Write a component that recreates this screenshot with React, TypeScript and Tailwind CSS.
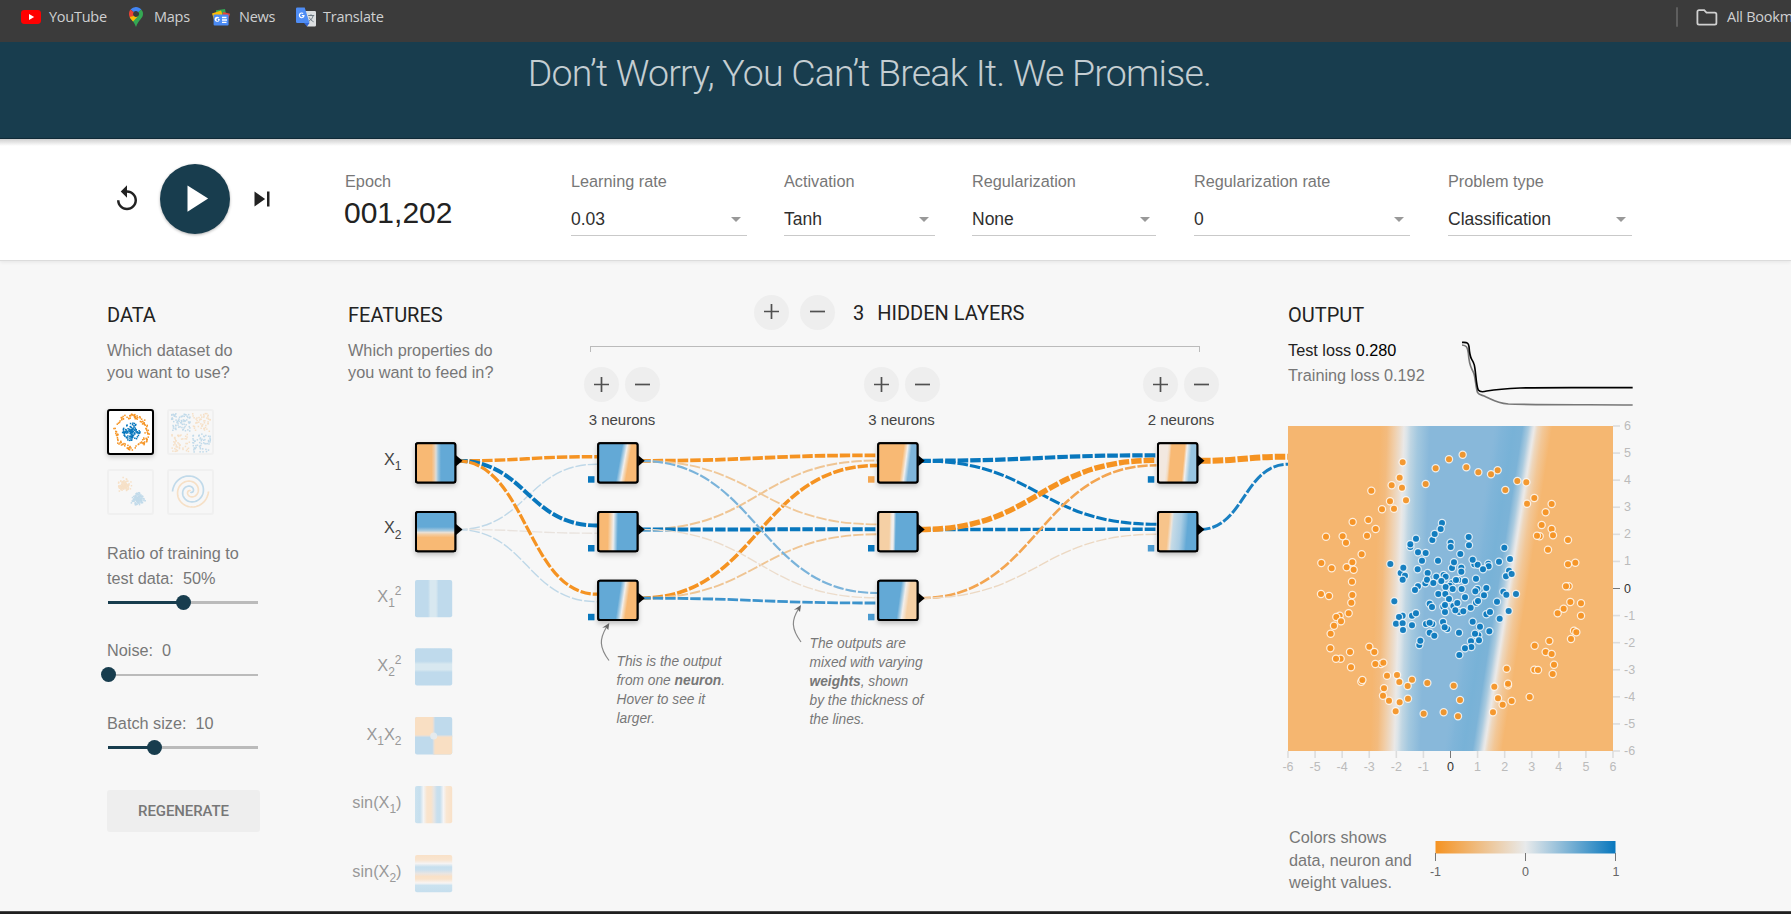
import React from "react";

const ARIAL = "font-['Liberation_Sans',Arial,sans-serif]";
const ORANGE = "#f59322";
const BLUE = "#0877bd";

type Stop = [number, string];

/* ---------- Browser bookmarks bar ---------- */

function YouTubeIcon() {
  return (
    <svg width="20" height="14" viewBox="0 0 20 14">
      <rect width="20" height="14" rx="3.4" fill="#f00" />
      <path d="M8 4v6l5.2-3z" fill="#fff" />
    </svg>
  );
}

function MapsIcon() {
  return (
    <svg width="14" height="20" viewBox="0 0 14 20">
      <path d="M7 0C9.1 0 11 .9 12.3 2.4L9.2 5.200A2.900 2.900 0 0 0 4.700 5.100L1.500 2.600A7 7 0 0 1 7 0z" fill="#4285f4" />
      <path d="M1.500 2.600L4.700 5.300A2.900 2.900 0 0 0 4.800 9L1.700 11.700C.600 10.200 0 8.600 0 7c0-1.700.500-3.200 1.500-4.400z" fill="#ea4335" />
      <path d="M9.300 5.100L12.300 2.400A7 7 0 0 1 14 7c0 4.500-4.500 5.500-7 13C5.500 15.700 3.500 13.700 1.700 11.700L4.800 9a2.900 2.900 0 0 0 4.400 0 2.900 2.900 0 0 0 .1-3.900z" fill="#34a853" />
      <path d="M1.700 11.700L9.200 9a2.900 2.900 0 0 1-4.400 0L.700 10c.300.600.600 1.200 1 1.700l2.300 2.700L9.200 9z" fill="#fbbc04" />
    </svg>
  );
}

function NewsIcon() {
  return (
    <svg width="18" height="17" viewBox="0 0 18 17">
      <path d="M4 1.200L13 0l1 5H4z" fill="#34a853" />
      <path d="M0 4.500l9-3 3 8-9 4z" fill="#fbbc04" />
      <path d="M11 3l7 1.800-2.500 8L10 10z" fill="#ea4335" />
      <rect x="1.600" y="5.500" width="15" height="11" rx="1" fill="#4a8bf5" />
      <path d="M7.700 10H5.900v1.400h.8a1.300 1.300 0 1 1-.3-1.800l.9-.9a2.600 2.600 0 1 0 .5 1.300z" fill="#fff" />
      <path d="M10 8.500h4.500M10 11h5M10 13.400h4.500" stroke="#fff" strokeWidth="1.300" />
    </svg>
  );
}

function TranslateIcon() {
  return (
    <svg width="20" height="20" viewBox="0 0 20 20">
      <path d="M9 4h9.500A1.300 1.300 0 0 1 20 5.300v12.900A1.300 1.300 0 0 1 18.700 19.500H11z" fill="#dcdfe1" />
      <path d="M8 16h5.500L11 19.500z" fill="#3367d6" />
      <path d="M1.200.500h7.500L13.500 16H1.200A1.200 1.200 0 0 1 0 14.800V1.700A1.200 1.200 0 0 1 1.200.500z" fill="#4f8df5" />
      <path d="M12.200 8.500h6M15 7.300v1.200M17.200 8.500c-.6 2.600-2.200 4.400-4.200 5.600M13.300 10.500c.8 1.800 2.400 3.300 4.300 4.300" stroke="#6d7a83" strokeWidth="1" fill="none" />
      <path d="M8.600 8H5.800v1.200h1.400a1.700 1.700 0 1 1-.5-2.200l.9-.9a2.900 2.900 0 1 0 1 1.900z" fill="#fff" />
    </svg>
  );
}

function BookmarksBar() {
  return (
    <div className="flex h-[42px] items-start overflow-hidden bg-[#3b3b3b] font-['Open_Sans','Noto_Sans',sans-serif] text-[14.5px] tracking-[-0.25px] text-[#cfd0d1]">
      <div className="flex h-[34px] w-full items-center pl-[21px]">
        <div className="flex w-[108px] items-center gap-[8px]"><YouTubeIcon /><span>YouTube</span></div>
        <div className="flex w-[83px] items-center gap-[11px]"><MapsIcon /><span>Maps</span></div>
        <div className="flex w-[84px] items-center gap-[9px]"><NewsIcon /><span>News</span></div>
        <div className="flex items-center gap-[7px]"><TranslateIcon /><span>Translate</span></div>
        <div className="ml-auto flex w-[115px] items-center whitespace-nowrap">
          <div className="h-[20px] w-[2px] shrink-0 rounded bg-[#5e5e5e]" />
          <svg className="ml-[18px] shrink-0" width="22" height="17" viewBox="0 0 22 17">
            <path d="M3 1.200h5.200l2.300 2.500h8.300a1.600 1.600 0 0 1 1.600 1.600v8.800a1.600 1.600 0 0 1-1.600 1.600H3a1.600 1.600 0 0 1-1.600-1.600V2.800A1.600 1.600 0 0 1 3 1.200z" fill="none" stroke="#d0d0d0" strokeWidth="1.800" />
          </svg>
          <span className="ml-[9px]">All Bookmarks</span>
        </div>
      </div>
    </div>
  );
}

/* ---------- Top controls ---------- */

interface SelectProps {
  label: string;
  value: string;
  className: string;
}

function Select({ label, value, className }: SelectProps) {
  return (
    <div className={"shrink-0 " + className}>
      <div className="mt-[31px] h-[22px] text-[16.250px] leading-[22px] text-[#777]">{label}</div>
      <div className="mt-[11px] flex h-[33px] items-center justify-between border-b border-[#c9c9c9] pr-[6px]">
        <span className="text-[17.500px] leading-[28px] text-[#2f2f2f]">{value}</span>
        <svg width="10" height="5" viewBox="0 0 10 5"><path d="M0 0h10L5 5z" fill="#999" /></svg>
      </div>
    </div>
  );
}

function TopControls() {
  return (
    <div className={"relative flex h-[122px] border-b border-[#dcdcdc] bg-white shadow-[0_1px_4px_rgba(0,0,0,0.08)] " + ARIAL}>
      <div className="absolute inset-x-0 top-0 h-[7px] bg-gradient-to-b from-[#cfcfcf] to-white" />
      <div className="flex w-[345px] items-center pb-[2px] pl-[112px]">
        <svg width="30" height="30" viewBox="0 0 24 24" fill="#222">
          <path d="M12 5V1L7 6l5 5V7c3.310 0 6 2.690 6 6s-2.690 6-6 6-6-2.690-6-6H4c0 4.420 3.580 8 8 8s8-3.580 8-8-3.580-8-8-8z" />
        </svg>
        <div className="ml-[18px] flex size-[70px] items-center justify-center rounded-full bg-[#183d4e] shadow-[0_1px_3px_rgba(0,0,0,0.3)]">
          <svg width="46" height="45" viewBox="0 0 24 24" fill="#fff"><path d="M8 5v14l11-7z" /></svg>
        </div>
        <svg className="ml-[17px]" width="30" height="30" viewBox="0 0 24 24" fill="#222">
          <path d="M6 18l8.500-6L6 6v12zM16 6v12h2V6h-2z" />
        </svg>
      </div>
      <div className="w-[226px]">
        <div className="mt-[31px] h-[22px] text-[16.250px] leading-[22px] text-[#777]">Epoch</div>
        <div className="-ml-px mt-[3px] text-[30px] leading-[36px] text-[#222]">001,202</div>
      </div>
      <Select label="Learning rate" value="0.03" className="w-[176px]" />
      <Select label="Activation" value="Tanh" className="ml-[37px] w-[151px]" />
      <Select label="Regularization" value="None" className="ml-[37px] w-[184px]" />
      <Select label="Regularization rate" value="0" className="ml-[38px] w-[216px]" />
      <Select label="Problem type" value="Classification" className="ml-[38px] w-[184px]" />
    </div>
  );
}

/* ---------- Data column ---------- */

function seeded(seed: number) {
  let s = seed;
  return () => {
    s = (s * 16807) % 2147483647;
    return s / 2147483647;
  };
}

type Dot = [number, number, string];

function circleDots(): Dot[] {
  const r = seeded(11);
  const out: Dot[] = [];
  for (let i = 0; i < 110; i++) {
    const d = 9 * Math.pow(r(), 0.9), a = r() * Math.PI * 2;
    out.push([24.5 + d * Math.cos(a), 23 + d * Math.sin(a), BLUE]);
  }
  for (let i = 0; i < 115; i++) {
    const d = 13.5 + 4.5 * r(), a = r() * Math.PI * 2;
    out.push([24.5 + d * Math.cos(a), 23 + d * Math.sin(a), ORANGE]);
  }
  return out;
}

function xorDots(): Dot[] {
  const r = seeded(42);
  const out: Dot[] = [];
  for (let i = 0; i < 230; i++) {
    const left = r() < 0.5, top = r() < 0.5;
    const x = left ? 4.5 + r() * 18.5 : 25.5 + r() * 18;
    const y = top ? 4.5 + r() * 18 : 25 + r() * 18;
    out.push([x, y, left === top ? BLUE : ORANGE]);
  }
  return out;
}

function gaussDots(): Dot[] {
  const r = seeded(7);
  const g = () => r() + r() + r() + r() - 2;
  const out: Dot[] = [];
  for (let i = 0; i < 110; i++) {
    out.push([17 + g() * 4.4, 16 + g() * 4.4, ORANGE]);
    out.push([31 + g() * 4.4, 30 + g() * 4.4, BLUE]);
  }
  return out;
}

function DotPlot({ dots }: { dots: Dot[] }) {
  return (
    <g>
      {dots.map(([x, y, c], i) => (
        <rect key={i} x={x - 0.7} y={y - 0.7} width="1.500" height="1.500" fill={c} />
      ))}
    </g>
  );
}

function spiralPath(delta: number) {
  const pts: string[] = [];
  for (let i = 2; i <= 100; i++) {
    const rad = (i / 100) * 18;
    const t = (i / 100) * 1.75 * 2 * Math.PI + delta;
    pts.push((23.5 + rad * Math.sin(t)).toFixed(2) + " " + (22.5 + rad * Math.cos(t)).toFixed(2));
  }
  return "M" + pts.join("L");
}

function Thumb({ active, children }: { active?: boolean; children: React.ReactNode }) {
  return (
    <div className={active ? "h-[46px] w-[47px] overflow-hidden rounded-[3px] border-2 border-black bg-white shadow-[0_2px_5px_rgba(0,0,0,0.2)]" : "h-[46px] w-[47px] overflow-hidden rounded-[3px] border-2 border-[#f0f0f0]"}>
      <svg className={active ? "-ml-[2px] -mt-[2px]" : "-ml-[2px] -mt-[2px] opacity-[0.22]"} width="47" height="46" viewBox="0 0 47 46">{children}</svg>
    </div>
  );
}

function Slider({ at, thin }: { at: number; thin?: boolean }) {
  return (
    <div className="relative ml-px flex h-[15px] w-[150px] items-center">
      <div className={thin ? "h-[2px] w-full bg-[#bbb]" : "h-[3px] w-full bg-[#bbb]"} />
      <div className="absolute left-0 h-[3px] bg-[#183d4e]" style={{ width: at }} />
      <div className="absolute size-[15px] rounded-full bg-[#183d4e]" style={{ left: at - 7.5 }} />
    </div>
  );
}

function DataColumn() {
  return (
    <div className={"w-[349px] shrink-0 pl-[107px] text-[16.250px] text-[#777] " + ARIAL}>
      <h2 className="mt-[42px] font-[Roboto,sans-serif] text-[20px] leading-[24px] text-[#222]">DATA</h2>
      <p className="mt-[12px] h-[44px] leading-[22px]">Which dataset do<br />you want to use?</p>
      <div className="mt-[26px] grid w-[107px] grid-cols-[47px_47px] gap-x-[13px] gap-y-[14px]">
        <Thumb active><DotPlot dots={circleDots()} /></Thumb>
        <Thumb><DotPlot dots={xorDots()} /></Thumb>
        <Thumb><DotPlot dots={gaussDots()} /></Thumb>
        <Thumb>
          <path d={spiralPath(0)} fill="none" stroke={BLUE} strokeWidth="1.700" />
          <path d={spiralPath(Math.PI)} fill="none" stroke={ORANGE} strokeWidth="1.700" />
        </Thumb>
      </div>
      <p className="mt-[26px] h-[50px] leading-[25px] whitespace-pre">{"Ratio of training to\ntest data:  50%"}</p>
      <div className="mt-[4px]"><Slider at={75.5} /></div>
      <p className="mt-[28px] h-[25px] leading-[25px] whitespace-pre">{"Noise:  0"}</p>
      <div className="mt-[4px]"><Slider at={0.5} thin /></div>
      <p className="mt-[29px] h-[25px] leading-[25px] whitespace-pre">{"Batch size:  10"}</p>
      <div className="mt-[4px]"><Slider at={46.5} /></div>
      <button className="mt-[35px] h-[42px] w-[153px] rounded-[3px] bg-[#eee] font-[Roboto,sans-serif] text-[15px] font-medium tracking-[-0.1px] text-[#777]">REGENERATE</button>
    </div>
  );
}

/* ---------- Network diagram ---------- */

interface HeatProps {
  id: string;
  x: number;
  y: number;
  size: number;
  stops: Stop[];
  tilt?: number;
  vertical?: boolean;
  r?: number;
}

function Heat({ id, x, y, size, stops, tilt = 0, vertical, r = 2 }: HeatProps) {
  const k = size / (1 + tilt * tilt);
  return (
    <g>
      <linearGradient
        id={id}
        gradientUnits="userSpaceOnUse"
        x1={x}
        y1={y}
        x2={vertical ? x : x + k}
        y2={vertical ? y + size : y + k * tilt}
      >
        {stops.map(([o, c], i) => (
          <stop key={i} offset={o / size} stopColor={c} />
        ))}
      </linearGradient>
      <rect x={x} y={y} width={size} height={size} rx={r} fill={"url(#" + id + ")"} />
    </g>
  );
}

const NO = "#f8b974";
const NB = "#63a9d6";
const W = "#f1eeec";

interface NodeSpec {
  x: number;
  y: number;
  stops: Stop[];
  tilt?: number;
  vertical?: boolean;
  bias?: string;
}

const nodes: NodeSpec[] = [
  { x: 415, y: 442.2, stops: [[15.5, NO], [18, "#f0c9a0"], [20, "#dcdcd8"], [22, "#9cc5de"], [25, NB]] },
  { x: 415, y: 511, vertical: true, stops: [[15, NB], [18.5, "#a7c9de"], [20.5, "#e8dfd4"], [22.5, "#f3cda2"], [25.5, NO]] },
  { x: 597.2, y: 442.2, tilt: 0.18, bias: BLUE, stops: [[24.5, NB], [27.5, "#b3d2e5"], [29.5, W], [31, "#f4dcc0"], [34, NO]] },
  { x: 597.2, y: 511, tilt: 0.02, bias: BLUE, stops: [[10, NO], [13, "#f4d6b4"], [15.5, W], [17, "#c0d9e8"], [20, NB]] },
  { x: 597.2, y: 579.8, tilt: 0.15, bias: BLUE, stops: [[23, NB], [26, "#b3d2e5"], [28, W], [29.500, "#f4dcc0"], [32.5, NO]] },
  { x: 877.2, y: 442.2, tilt: 0.13, bias: "#f4a650", stops: [[26, NO], [28.500, "#f5dabb"], [30, W], [31.5, "#c0d9e8"], [34, "#7fb5da"]] },
  { x: 877.2, y: 511, tilt: 0.02, bias: BLUE, stops: [[11.5, "#f5d0a5"], [14, W], [15.5, W], [18, NB]] },
  { x: 877.2, y: 579.8, tilt: 0.14, bias: "#4a9ad0", stops: [[23.500, NB], [26.500, "#b3d2e5"], [28.500, W], [31, "#f4dfc8"], [33, "#f5d0a5"]] },
  { x: 1157, y: 442.2, tilt: 0.09, bias: BLUE, stops: [[10, "#f2e8e0"], [12, "#f3dcc3"], [14, NO], [27, NO], [29.500, W], [31.5, "#c8dde9"], [34, "#98c5e1"]] },
  { x: 1157, y: 511, tilt: 0.09, bias: "#4a9ad0", stops: [[11.5, "#f7c48b"], [14.5, "#f0e4d8"], [16.5, "#c5dae6"], [24, "#aacde4"], [29, "#7bb5da"], [31, NB]] },
];

interface LinkSpec {
  from: [number, number];
  to: [number, number];
  w: number;
  c: string;
}

const S1 = 457, S2 = 640, S3 = 920, S4 = 1200;
const T1 = 597, T2 = 877, T3 = 1156.500, T4 = 1288;
const R1 = 460.800, R2 = 529.500, R3 = 598.200;

const links: LinkSpec[] = [
  { from: [S1, R1], to: [T1, 456.700], w: 3.4, c: ORANGE },
  { from: [S1, R2], to: [T1, 464.200], w: 1.4, c: "#bfd8e8" },
  { from: [S1, R1], to: [T1, 525.500], w: 4, c: BLUE },
  { from: [S1, R2], to: [T1, 533.200], w: 1.4, c: "#e9e3de" },
  { from: [S1, R1], to: [T1, 594.200], w: 3.2, c: ORANGE },
  { from: [S1, R2], to: [T1, 601.700], w: 1.4, c: "#bfd8e8" },
  { from: [S2, R1], to: [T2, 455.300], w: 3.8, c: ORANGE },
  { from: [S2, R2], to: [T2, 460.500], w: 2, c: "#efc594" },
  { from: [S2, R3], to: [T2, 465.500], w: 3.6, c: ORANGE },
  { from: [S2, R1], to: [T2, 524.300], w: 1.8, c: "#f0c899" },
  { from: [S2, R2], to: [T2, 529.300], w: 4, c: BLUE },
  { from: [S2, R3], to: [T2, 534.300], w: 1.9, c: "#efc594" },
  { from: [S2, R1], to: [T2, 593], w: 2.2, c: "#7ab3da" },
  { from: [S2, R2], to: [T2, 597.800], w: 1.4, c: "#ecdccb" },
  { from: [S2, R3], to: [T2, 603], w: 2.8, c: "#3c93cc" },
  { from: [S3, R1], to: [T3, 455.300], w: 4.2, c: BLUE },
  { from: [S3, R1], to: [T3, 524.300], w: 3.1, c: BLUE },
  { from: [S3, R2], to: [T3, 529.300], w: 3.4, c: BLUE },
  { from: [S3, R2], to: [T3, 460.300], w: 5.4, c: ORANGE },
  { from: [S3, R3], to: [T3, 465.300], w: 2.6, c: "#f3a551" },
  { from: [S3, R3], to: [T3, 534.300], w: 1.4, c: "#ecd8c2" },
  { from: [S4, R1], to: [T4, 456.700], w: 6, c: ORANGE },
  { from: [S4, R2], to: [T4, 464.300], w: 3, c: "#1a80c2" },
];

function linkPath({ from, to }: LinkSpec) {
  const m = (from[0] + to[0]) / 2;
  return `M${from[0]} ${from[1]}C${m} ${from[1]} ${m} ${to[1]} ${to[0]} ${to[1]}`;
}

function DiagramNode({ n, i }: { n: NodeSpec; i: number }) {
  return (
    <g>
      <path d={`M${n.x + 41} ${n.y + 13}l6.500 5.500l-6.500 5.500z`} fill="#000" />
      {n.bias && <rect x={n.x - 9.200} y={n.y + 34} width="6.500" height="6.500" fill={n.bias} />}
      <rect x={n.x} y={n.y} width="41.300" height="41.300" rx="2.500" fill="#000" filter="url(#nodeShadow)" />
      <Heat id={"node" + i} x={n.x + 1} y={n.y + 1} size={39.300} stops={n.stops} tilt={n.tilt} vertical={n.vertical} />
      <rect x={n.x + 1} y={n.y + 1} width="39.300" height="39.300" rx="2" fill="none" stroke="#000" strokeWidth="2" />
    </g>
  );
}

const LB = "#bfdaec";
const LO = "#f9dfc3";

function FeatureLabels() {
  const sub = { fontSize: 12 };
  return (
    <g className={ARIAL} fontSize="16.250" textAnchor="end">
      <text x="401.500" y="464.500" fill="#444">X<tspan {...sub} dy="5.500">1</tspan></text>
      <text x="401.500" y="533" fill="#444">X<tspan {...sub} dy="5.500">2</tspan></text>
      <g fill="#999">
        <text x="401.500" y="601.500">X<tspan {...sub} dy="5.500">1</tspan><tspan {...sub} dy="-12.500">2</tspan></text>
        <text x="401.500" y="670.500">X<tspan {...sub} dy="5.500">2</tspan><tspan {...sub} dy="-12.500">2</tspan></text>
        <text x="401.500" y="739.500">X<tspan {...sub} dy="5.500">1</tspan><tspan dy="-5.500">X</tspan><tspan {...sub} dy="5.500">2</tspan></text>
        <text x="401.500" y="807.500">sin(X<tspan {...sub} dy="5.500">1</tspan><tspan dy="-5.500">)</tspan></text>
        <text x="401.500" y="876.500">sin(X<tspan {...sub} dy="5.500">2</tspan><tspan dy="-5.500">)</tspan></text>
      </g>
    </g>
  );
}

function InactiveFeatures() {
  return (
    <g>
      <Heat id="fx1sq" x={415} y={580} size={37.200} stops={[[13, LB], [15.500, "#d8e8f0"], [21, "#d8e8f0"], [23.500, LB]]} />
      <Heat id="fx2sq" x={415} y={648.200} size={37.200} vertical stops={[[13, LB], [16, "#d8e8f0"], [21.500, "#d8e8f0"], [24, LB]]} />
      <clipPath id="prodClip"><rect x="415" y="717" width="37.200" height="37.500" rx="2" /></clipPath>
      <g clipPath="url(#prodClip)">
        <rect x="415" y="717" width="38" height="38" fill={LB} />
        <rect x="415" y="717" width="18.700" height="19" fill={LO} />
        <rect x="433.700" y="736" width="19" height="19" fill={LO} />
        <rect x="432.700" y="717" width="2" height="38" fill="#e3e0dc" opacity="0.600" />
        <rect x="415" y="735" width="38" height="2" fill="#e3e0dc" opacity="0.600" />
        <circle cx="433.700" cy="736" r="3.500" fill="#e6ebee" opacity="0.900" />
      </g>
      <Heat id="fsin1" x={415} y={786} size={37.200} stops={[[0, "#cbe2ef"], [5, "#c6dfee"], [8.500, "#f3f4f5"], [12, "#f9e4cd"], [16, "#f9e3cb"], [19, "#e5e5e5"], [22, "#c9dfee"], [25, "#c6dfee"], [28.500, "#f5f4f5"], [31.500, "#f9e7d3"], [37, "#f9e1c8"]]} />
      <Heat id="fsin2" x={415} y={855} size={37.200} vertical stops={[[0, "#f9e1c8"], [5, "#f9e5d0"], [8.500, "#f5f3f3"], [12, "#c6dfee"], [15, "#cbe0ee"], [18.500, "#e9e5e2"], [21.500, "#f9e1c8"], [24, "#f9e3cb"], [28, "#f8f5f4"], [30.500, "#cbe2ef"], [37, "#c6dfee"]]} />
    </g>
  );
}

function Callouts() {
  return (
    <g className={ARIAL} fontSize="13.750" fontStyle="italic" fill="#777">
      <text x="616.500" y="666">This is the output</text>
      <text x="616.500" y="685">from one <tspan fontWeight="bold">neuron</tspan>.</text>
      <text x="616.500" y="704">Hover to see it</text>
      <text x="616.500" y="723">larger.</text>
      <text x="809.500" y="648">The outputs are</text>
      <text x="809.500" y="667">mixed with varying</text>
      <text x="809.500" y="686"><tspan fontWeight="bold">weights</tspan>, shown</text>
      <text x="809.500" y="705">by the thickness of</text>
      <text x="809.500" y="724">the lines.</text>
      <g fill="none" stroke="#888" strokeWidth="1.200">
        <path d="M609 660.500C599 647 599.500 639 606.500 627" />
        <path d="M801 642C791 628.500 791.500 620 798.500 609" />
      </g>
      <path d="M609.300 623l-1 7-2.400-2.800-3.700.600zM801 605l-1 7-2.400-2.800-3.700.600z" fill="#666" />
    </g>
  );
}

function RoundButton({ kind, raised }: { kind: "plus" | "minus"; raised?: boolean }) {
  return (
    <button className="flex size-[35px] items-center justify-center rounded-full bg-[#eee]">
      <svg className={raised ? "-mt-[2px]" : ""} width="15" height="15" viewBox="0 0 15 15">
        <path d={kind === "plus" ? "M0 7.500h15M7.500 0v15" : "M0 7.500h15"} stroke="#505050" strokeWidth="1.700" />
      </svg>
    </button>
  );
}

function NetworkColumn() {
  return (
    <div className="w-[939px] shrink-0">
      <div className="flex h-[175px]">
        <div className={"-ml-px w-[236px] text-[16.250px] text-[#777] " + ARIAL}>
          <h2 className="mt-[42px] font-[Roboto,sans-serif] text-[20px] leading-[24px] text-[#222]">FEATURES</h2>
          <p className="mt-[12px] leading-[22px]">Which properties do<br />you want to feed in?</p>
        </div>
        <div className="w-[704px] pt-[34px]">
          <div className="flex h-[35px] items-center pl-[170px] font-[Roboto,sans-serif] text-[20px] text-[#222]">
            <RoundButton kind="plus" raised />
            <div className="ml-[11px]"><RoundButton kind="minus" raised /></div>
            <span className="ml-[18px]">3</span>
            <span className="ml-[13px]">HIDDEN LAYERS</span>
          </div>
          <div className="ml-[6px] mt-[16px] h-[6px] w-[610px] border-x border-t border-[#bbb]" />
          <div className="mt-[15px] flex gap-[203.500px]">
            {[3, 3, 2].map((count, i) => (
              <div key={i} className="w-[76px]">
                <div className="flex justify-between">
                  <RoundButton kind="plus" />
                  <RoundButton kind="minus" />
                </div>
                <div className={"mt-[8px] text-center text-[15px] leading-[20px] text-[#444] " + ARIAL}>{count} neurons</div>
              </div>
            ))}
          </div>
        </div>
      </div>
      <svg width="939" height="475" viewBox="349 436 939 475">
        <defs>
          <filter id="nodeShadow" x="-30%" y="-30%" width="160%" height="170%">
            <feDropShadow dx="0" dy="2.500" stdDeviation="2.500" floodColor="#000" floodOpacity="0.240" />
          </filter>
        </defs>
        <g fill="none" strokeDasharray="10.500 2">
          {links.map((l, i) => (
            <path key={i} d={linkPath(l)} stroke={l.c} strokeWidth={l.w} />
          ))}
        </g>
        {nodes.map((n, i) => <DiagramNode key={i} n={n} i={i} />)}
        <InactiveFeatures />
        <FeatureLabels />
        <Callouts />
      </svg>
    </div>
  );
}

/* ---------- Output column ---------- */

const negative: number[] = [
  368,157,359,203,335,226,366,233,274,242,437,222,467,175,507,148,548,134,559,172,595,187,633,193,653,181,712,213,739,217,
  676,240,741,281,763,264,815,282,797,307,785,345,815,357,819,376,779,379,771,377,864,390,804,419,864,463,886,458,866,529,
  858,529,871,576,903,580,903,617,851,596,833,610,882,662,889,667,873,687,808,693,764,707,797,726,815,732,822,764,818,792,
  763,779,774,780,680,776,684,826,684,821,643,830,654,865,695,873,668,884,749,861,639,907,534,919,540,870,521,827,491,907,
  431,911,442,819,396,809,383,828,351,795,358,816,321,797,312,835,309,857,327,872,359,877,384,866,347,904,303,762,286,762,
  310,758,268,710,283,726,210,726,213,772,244,815,247,810,182,746,168,746,151,715,152,671,162,647,179,617,169,621,183,634,
  206,610,214,578,217,555,216,515,123,552,147,558,124,459,155,475,200,472,217,457,221,479,245,433,138,380,188,379,198,398,
  218,336,265,330,261,377,287,357,306,298,330,274,342,296,378,271,
];

const positive: number[] = [
  486,339,482,357,457,390,464,372,408,386,391,411,391,403,414,427,437,429,426,452,474,452,413,478,331,462,362,489,370,473,
  375,497,368,509,443,489,436,520,441,509,469,500,460,519,414,529,405,540,343,574,491,495,497,500,484,513,566,381,567,406,
  512,398,512,411,541,432,516,474,522,457,544,473,544,485,583,463,593,464,578,449,625,461,626,469,609,478,657,455,673,413,
  690,447,687,482,678,499,695,492,588,506,535,510,555,513,515,520,509,527,497,531,528,510,518,537,545,537,619,534,592,537,
  586,544,612,556,588,578,594,573,670,545,679,554,708,552,651,575,686,603,659,626,475,552,496,552,507,567,555,562,520,588,
  532,579,490,590,495,606,495,585,538,606,526,601,550,604,572,593,619,613,630,606,578,635,600,650,628,664,595,676,585,671,
  573,694,597,691,574,711,555,715,538,735,537,668,489,636,502,657,494,652,449,581,456,591,438,642,457,642,449,638,449,668,
  463,677,418,705,421,692,396,617,408,610,396,646,368,617,357,621,348,641,368,640,369,660,
];

function Points({ data, color }: { data: number[]; color: string }) {
  const out: React.ReactNode[] = [];
  for (let i = 0; i < data.length; i += 2) {
    out.push(<circle key={i} cx={(data[i] - 24) / 3} cy={(data[i + 1] - 48) / 3} r="3.600" />);
  }
  return <g fill={color} fillOpacity="0.920" stroke="#fff" strokeOpacity="0.800" strokeWidth="1.250">{out}</g>;
}

const leftStops: Stop[] = [[0, "#f5b670"], [7, "#f3bb7e"], [14, "#f1cda6"], [20, "#ecdccb"], [24, "#eae8e6"], [27, "#dbe4e9"], [31, "#c0d6e3"], [38, "#a3c8df"], [50, "#88b8da"]];
const rightStops: Stop[] = [[8, "#80b5d9"], [20, "#78b2d7"], [29, "#7cb3d7"], [35, "#a9cadf"], [39.5, "#e0e4e7"], [41, "#ebe9e7"], [44.5, "#eed7bd"], [50, "#f2c797"], [59, "#f5b771"]];

function HeatMap() {
  const ticks = [-6, -5, -4, -3, -2, -1, 0, 1, 2, 3, 4, 5, 6];
  return (
    <svg className="mt-[15px] overflow-visible" width="350" height="350" viewBox="0 0 350 350">
      <linearGradient id="fieldLeft" gradientUnits="userSpaceOnUse" x1="92" y1="0" x2="142" y2="1.500">
        {leftStops.map(([o, c]) => <stop key={o} offset={o / 50} stopColor={c} />)}
      </linearGradient>
      <linearGradient id="fieldRight" gradientUnits="userSpaceOnUse" x1="206" y1="0" x2="264" y2="9">
        <stop offset="0" stopColor="#84b7da" stopOpacity="0" />
        {rightStops.map(([o, c]) => <stop key={o} offset={o / 60} stopColor={c} />)}
      </linearGradient>
      <rect width="325" height="325" fill="url(#fieldLeft)" />
      <rect width="325" height="325" fill="url(#fieldRight)" />
      <Points data={negative} color={ORANGE} />
      <Points data={positive} color={BLUE} />
      <g className={ARIAL} fontSize="12.500">
        {ticks.map((t) => {
          const p = ((t + 6) / 12) * 325;
          const color = t === 0 ? "#333" : "#bbb";
          const line = t === 0 ? "#777" : "#ddd";
          return (
            <g key={t} fill={color}>
              <line x1={p} x2={p} y1="325" y2="332" stroke={line} strokeWidth={t === 0 ? 1 : 1.600} />
              <line x1="325" x2="332" y1={325 - p} y2={325 - p} stroke={line} strokeWidth={t === 0 ? 1 : 1.600} />
              <text x={p} y="345" textAnchor="middle">{t}</text>
              <text x="336" y={325 - p + 4} textAnchor="start">{t}</text>
            </g>
          );
        })}
      </g>
    </svg>
  );
}

function LossChart() {
  return (
    <svg width="175" height="72" viewBox="60 40 525 216" fill="none" strokeWidth="5">
      <path d="M66 61C78 62 83 66 85 85C88 130 95 128 101 145C106 155 108 195 113 204C117 212 127 211 137 216C160 226 165 234 205 238C250 240 400 240 578 241" stroke="#777" />
      <path d="M66 53C80 54 85 52 87 66C90 110 95 97 102 118C107 130 108 185 115 196C120 203 130 202 140 199C170 194 190 192 240 190C300 188 400 189 578 189" stroke="#000" />
    </svg>
  );
}

function Legend() {
  return (
    <div className={"mt-[50px] flex text-[16.250px] text-[#777] " + ARIAL}>
      <p className="w-[141px] shrink-0 pl-px leading-[22.500px]">Colors shows<br />data, neuron and<br />weight values.</p>
      <svg className="mt-[15px] overflow-visible" width="190" height="40" viewBox="0 0 190 40">
        <linearGradient id="legendScale">
          <stop offset="0" stopColor={ORANGE} />
          <stop offset="0.500" stopColor="#e8eaeb" />
          <stop offset="1" stopColor={BLUE} />
        </linearGradient>
        <rect x="6.500" y="0" width="180" height="12.500" fill="url(#legendScale)" />
        <path d="M6.500 12v8M96.500 12v8M186.500 12v8" stroke="#777" />
        <g fontSize="12.500" fill="#666" textAnchor="middle">
          <text x="6.500" y="35">-1</text>
          <text x="96.500" y="35">0</text>
          <text x="187" y="35">1</text>
        </g>
      </svg>
    </div>
  );
}

function OutputColumn() {
  return (
    <div className={"w-[360px] shrink-0 text-[16.250px] " + ARIAL}>
      <div className="flex h-[150px]">
        <div className="w-[172px]">
          <h2 className="mt-[42px] font-[Roboto,sans-serif] text-[20px] leading-[24px] text-[#222]">OUTPUT</h2>
          <div className="mt-[11px] leading-[25px] whitespace-nowrap">
            <div className="text-[#222]">Test loss <span className="text-black">0.280</span></div>
            <div className="text-[#777]">Training loss 0.192</div>
          </div>
        </div>
        <div className="pt-[77px]"><LossChart /></div>
      </div>
      <HeatMap />
      <Legend />
    </div>
  );
}

export default function App() {
  return (
    <div className="flex h-[914px] w-[1791px] flex-col overflow-hidden bg-[#f7f7f7]">
      <BookmarksBar />
      <header className="h-[97px] shrink-0 border-b border-[#102b38] bg-[#183d4e] text-center">
        <h1 className="-ml-[52px] pt-[9px] font-[Roboto,sans-serif] text-[37.500px] leading-[44px] font-light tracking-[-0.770px] text-white/75">
          Don’t Worry, You Can’t Break It. We Promise.
        </h1>
      </header>
      <div className="shrink-0"><TopControls /></div>
      <main className="flex h-[650px] shrink-0">
        <DataColumn />
        <NetworkColumn />
        <OutputColumn />
      </main>
      <div className="h-[3px] shrink-0 border-t border-[#4a4a4a] bg-[#202020]" />
    </div>
  );
}
